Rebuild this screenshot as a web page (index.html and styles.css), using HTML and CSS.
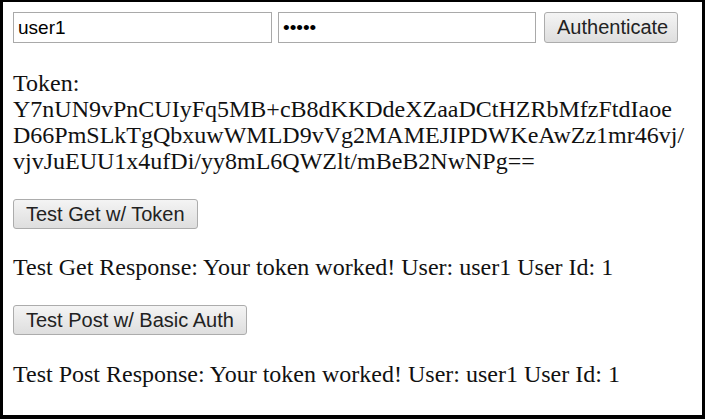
FILE: index.html
```html
<!DOCTYPE html>
<html lang="en">
  <head>
    <meta charset="UTF-8" />
    <title>Token Auth Test</title>
    <link rel="stylesheet" href="styles.css">
  </head>
  <body>
    <div class="frame">
      <div class="auth-row">
        <input type="text" id="username" class="field" value="user1" />
        <input type="password" id="password" class="field field-pass" value="12345" />
        <button id="authBtn" class="btn btn-auth">Authenticate</button>
      </div>

      <p class="token">
        Token:<br />Y7nUN9vPnCUIyFq5MB+cB8dKKDdeXZaaDCtHZRbMfzFtdIaoe<br />D66PmSLkTgQbxuwWMLD9vVg2MAMEJIPDWKeAwZz1mr46vj/<br />vjvJuEUU1x4ufDi/yy8mL6QWZlt/mBeB2NwNPg==
      </p>

      <div>
        <button id="getBtn" class="btn">Test Get w/ Token</button>
      </div>

      <p>Test Get Response: Your token worked! User: user1 User Id: 1</p>

      <div>
        <button id="postBtn" class="btn">Test Post w/ Basic Auth</button>
      </div>

      <p class="last">Test Post Response: Your token worked! User: user1 User Id: 1</p>
    </div>
  </body>
</html>
```

FILE: styles.css
```css
html,
body {
  margin: 0;
  height: 100%;
  background: #000;
}
body {
  font-family: "Liberation Serif", "Times New Roman", serif;
  font-size: 24px;
  line-height: 26px;
  color: #111;
}
.frame {
  box-sizing: border-box;
  height: 100%;
  background: #fff;
  border-style: solid;
  border-color: #000;
  border-width: 2px 3px 4px 3px;
  padding: 10px 10px 0 10px;
  display: flex;
  flex-direction: column;
  align-items: flex-start;
  gap: 25px;
}
p {
  margin: 0;
}
.token {
  margin-top: 2px;
}
.last {
  margin-top: 1px;
}
.auth-row {
  display: flex;
  align-items: flex-start;
}
.field {
  box-sizing: border-box;
  width: 259px;
  height: 31px;
  margin: 0 6px 0 0;
  padding: 0 4px;
  border: 1px solid #a9a9a9;
  font-family: "Liberation Sans", Arial, sans-serif;
  font-size: 19px;
  color: #000;
}
.field-pass {
  width: 258px;
  margin-right: 8px;
}
.btn {
  box-sizing: border-box;
  height: 30px;
  padding: 0 12px;
  border: 1px solid #acacac;
  border-radius: 3px;
  background: linear-gradient(#f4f4f4, #dedede);
  font-family: "Liberation Sans", Arial, sans-serif;
  font-size: 20px;
  color: #222;
  cursor: pointer;
}
.btn-auth {
  width: 134px;
  height: 31px;
}
```
